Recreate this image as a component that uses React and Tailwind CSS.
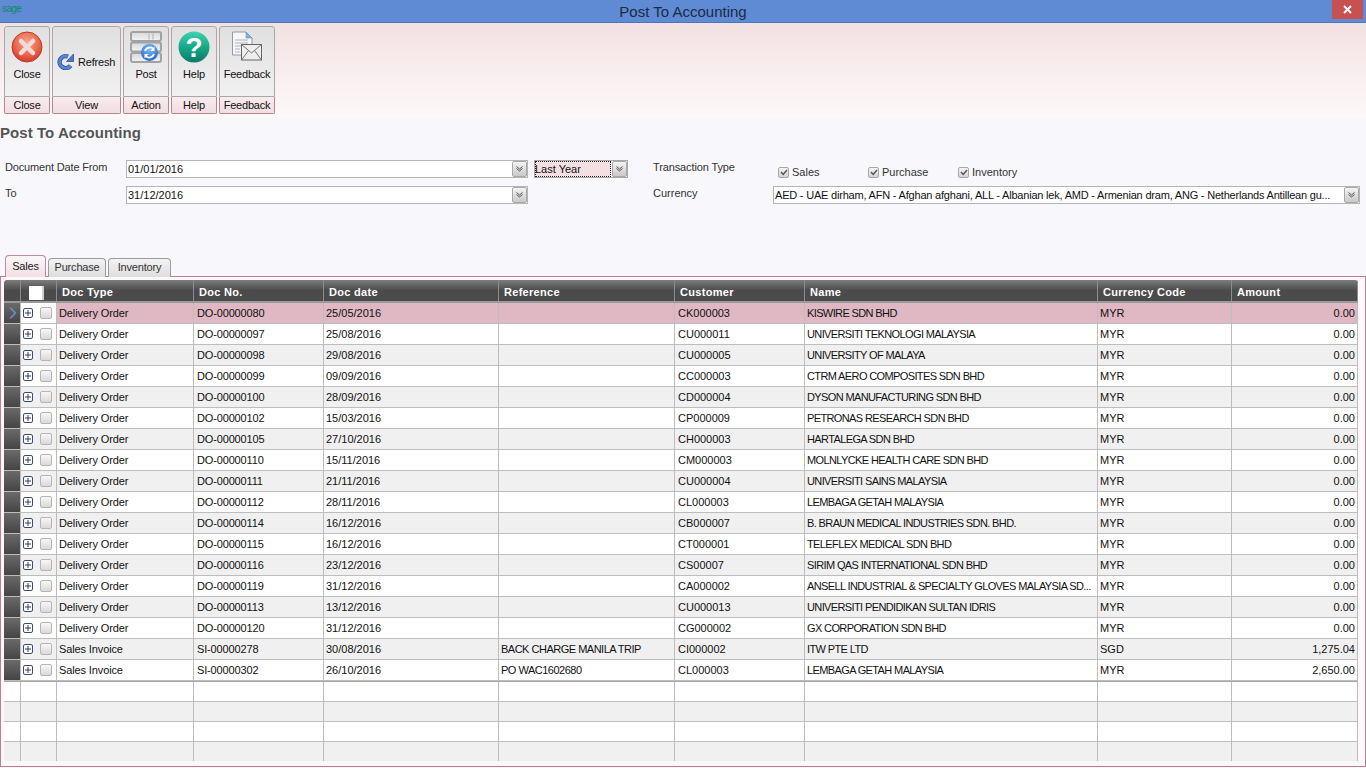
import React from 'react';

const tahoma = "font-['Liberation_Sans',Arial,sans-serif]";

const columns = [
    { key: 'rowHead', width: 'w-[17px]' },
    { key: 'tools', width: 'w-[36px]' },
    { key: 'type', width: 'w-[137px]', label: 'Doc Type', cell: 'pl-[2px] tracking-[-0.12px]' },
    { key: 'no', width: 'w-[130px]', label: 'Doc No.', cell: 'pl-[3px] tracking-[-0.15px]' },
    { key: 'date', width: 'w-[175px]', label: 'Doc date', cell: 'pl-[2px]' },
    { key: 'ref', width: 'w-[176px]', label: 'Reference', cell: 'pl-[2px] tracking-[-0.5px]' },
    { key: 'cust', width: 'w-[130px]', label: 'Customer', cell: 'pl-[3px]' },
    { key: 'name', width: 'w-[293px]', label: 'Name', cell: 'pl-[2px] tracking-[-0.62px]' },
    { key: 'cur', width: 'w-[134px]', label: 'Currency Code', cell: 'pl-[2px]' },
    { key: 'amt', width: 'w-[126px]', label: 'Amount', cell: 'pr-[2px] text-right' },
];

const rows = [
    ['Delivery Order', 'DO-00000080', '25/05/2016', '', 'CK000003', 'KISWIRE SDN BHD', 'MYR', '0.00'],
    ['Delivery Order', 'DO-00000097', '25/08/2016', '', 'CU000011', 'UNIVERSITI TEKNOLOGI MALAYSIA', 'MYR', '0.00'],
    ['Delivery Order', 'DO-00000098', '29/08/2016', '', 'CU000005', 'UNIVERSITY OF MALAYA', 'MYR', '0.00'],
    ['Delivery Order', 'DO-00000099', '09/09/2016', '', 'CC000003', 'CTRM AERO COMPOSITES SDN BHD', 'MYR', '0.00'],
    ['Delivery Order', 'DO-00000100', '28/09/2016', '', 'CD000004', 'DYSON MANUFACTURING SDN BHD', 'MYR', '0.00'],
    ['Delivery Order', 'DO-00000102', '15/03/2016', '', 'CP000009', 'PETRONAS RESEARCH SDN BHD', 'MYR', '0.00'],
    ['Delivery Order', 'DO-00000105', '27/10/2016', '', 'CH000003', 'HARTALEGA SDN BHD', 'MYR', '0.00'],
    ['Delivery Order', 'DO-00000110', '15/11/2016', '', 'CM000003', 'MOLNLYCKE HEALTH CARE SDN BHD', 'MYR', '0.00'],
    ['Delivery Order', 'DO-00000111', '21/11/2016', '', 'CU000004', 'UNIVERSITI SAINS MALAYSIA', 'MYR', '0.00'],
    ['Delivery Order', 'DO-00000112', '28/11/2016', '', 'CL000003', 'LEMBAGA GETAH MALAYSIA', 'MYR', '0.00'],
    ['Delivery Order', 'DO-00000114', '16/12/2016', '', 'CB000007', 'B. BRAUN MEDICAL INDUSTRIES SDN. BHD.', 'MYR', '0.00'],
    ['Delivery Order', 'DO-00000115', '16/12/2016', '', 'CT000001', 'TELEFLEX MEDICAL SDN BHD', 'MYR', '0.00'],
    ['Delivery Order', 'DO-00000116', '23/12/2016', '', 'CS00007', 'SIRIM QAS INTERNATIONAL SDN BHD', 'MYR', '0.00'],
    ['Delivery Order', 'DO-00000119', '31/12/2016', '', 'CA000002', 'ANSELL INDUSTRIAL & SPECIALTY GLOVES MALAYSIA SD...', 'MYR', '0.00'],
    ['Delivery Order', 'DO-00000113', '13/12/2016', '', 'CU000013', 'UNIVERSITI PENDIDIKAN SULTAN IDRIS', 'MYR', '0.00'],
    ['Delivery Order', 'DO-00000120', '31/12/2016', '', 'CG000002', 'GX CORPORATION SDN BHD', 'MYR', '0.00'],
    ['Sales Invoice', 'SI-00000278', '30/08/2016', 'BACK CHARGE MANILA TRIP', 'CI000002', 'ITW PTE LTD', 'SGD', '1,275.04'],
    ['Sales Invoice', 'SI-00000302', '26/10/2016', 'PO WAC1602680', 'CL000003', 'LEMBAGA GETAH MALAYSIA', 'MYR', '2,650.00'],
];

const CloseIcon = () => (
    <svg width="32" height="32" viewBox="0 0 32 32">
        <defs>
            <radialGradient id="closeBg" cx="50%" cy="35%" r="70%">
                <stop offset="0%" stopColor="#f7a58f" />
                <stop offset="55%" stopColor="#ec6a50" />
                <stop offset="100%" stopColor="#cf2f20" />
            </radialGradient>
        </defs>
        <circle cx="16" cy="16" r="15" fill="url(#closeBg)" stroke="#c0392b" />
        <path d="M10 10 L22 22 M22 10 L10 22" stroke="#f0dcd6" strokeWidth="4.5" strokeLinecap="round" />
    </svg>
);

const RefreshIcon = () => (
    <svg width="17" height="17" viewBox="0 0 17 17">
        <path d="M13.5 12.6 A6 6 0 1 1 11 3.6" fill="none" stroke="#2b4f95" strokeWidth="4.4" />
        <path d="M13.5 12.6 A6 6 0 1 1 11 3.6" fill="none" stroke="#5585d2" strokeWidth="3" />
        <path d="M9.5 8.5 L16.5 8.5 L16.5 1 Z" fill="#4a78c8" stroke="#2b4f95" strokeWidth="0.8" />
    </svg>
);

const PostIcon = () => (
    <svg width="32" height="32" viewBox="0 0 32 32">
        <defs>
            <linearGradient id="postBar" x1="0" y1="0" x2="0" y2="1">
                <stop offset="0%" stopColor="#d8d8d8" />
                <stop offset="100%" stopColor="#f4f4f4" />
            </linearGradient>
            <radialGradient id="postBall" cx="50%" cy="30%" r="75%">
                <stop offset="0%" stopColor="#7cc0f5" />
                <stop offset="100%" stopColor="#1f5fc4" />
            </radialGradient>
        </defs>
        <rect x="1" y="1" width="30" height="9" rx="2" fill="url(#postBar)" stroke="#a2a2a2" strokeWidth="2" />
        <rect x="1" y="11.5" width="30" height="9" rx="2" fill="url(#postBar)" stroke="#a2a2a2" strokeWidth="2" />
        <rect x="1" y="22" width="30" height="9" rx="2" fill="url(#postBar)" stroke="#a2a2a2" strokeWidth="2" />
        <path d="M19 2.5 V8.5 M23 2.5 V8.5" stroke="#c2c2c2" strokeWidth="1.5" />
        <circle cx="19.5" cy="21.5" r="8.5" fill="url(#postBall)" />
        <path d="M15 20 A5 5 0 0 1 23.5 18.1 M24 23 A5 5 0 0 1 15.5 24.9" stroke="#fff" strokeWidth="1.8" fill="none" />
        <path d="M24.5 15.5 V19.9 H20.3 Z M14.5 27.5 V23.1 H18.7 Z" fill="#fff" />
    </svg>
);

const HelpIcon = () => (
    <svg width="32" height="32" viewBox="0 0 32 32">
        <defs>
            <linearGradient id="helpBg" x1="0" y1="0" x2="0" y2="1">
                <stop offset="0%" stopColor="#3fd0ac" />
                <stop offset="55%" stopColor="#15a585" />
                <stop offset="100%" stopColor="#0b7a66" />
            </linearGradient>
        </defs>
        <circle cx="16" cy="16" r="15.5" fill="url(#helpBg)" />
        <text x="16" y="26" textAnchor="middle" fontSize="28" fontWeight="700" fill="#fff" fontFamily="Liberation Sans, sans-serif">?</text>
    </svg>
);

const FeedbackIcon = () => (
    <svg width="32" height="32" viewBox="0 0 32 32">
        <path d="M1.5 1 H15 L21 7 V24 H1.5 Z" fill="#f6f6f6" stroke="#8f9aa8" />
        <path d="M15 1 V7 H21 Z" fill="#7fb2e6" stroke="#6a8fbb" strokeWidth="0.6" />
        <path d="M4 9 H17 M4 12 H17 M4 15 H11 M4 18 H9 M4 21 H9" stroke="#a9b4c0" strokeWidth="1.2" />
        <rect x="10.5" y="13.5" width="20" height="15.5" fill="#eeeeee" stroke="#666" />
        <path d="M10.5 13.5 L20.5 22 L30.5 13.5 M10.5 29 L17.5 19.5 M30.5 29 L23.5 19.5" fill="none" stroke="#777" />
    </svg>
);

const ribbon = [
    { w: 'w-[46px]', group: 'Close', label: 'Close', icon: <CloseIcon /> },
    { w: 'w-[69px]', group: 'View', label: 'Refresh', icon: <RefreshIcon />, inline: true },
    { w: 'w-[46px]', group: 'Action', label: 'Post', icon: <PostIcon /> },
    { w: 'w-[46px]', group: 'Help', label: 'Help', icon: <HelpIcon /> },
    { w: 'w-[56px]', group: 'Feedback', label: 'Feedback', icon: <FeedbackIcon /> },
];

const DropButton = () => (
    <div className="w-[15px] h-[16px] shrink-0 flex items-center justify-center rounded-[2px] border border-[#a8a8a8] bg-gradient-to-b from-[#f4f4f4] to-[#c9c9c9]">
        <svg width="7" height="6" viewBox="0 0 7 6">
            <path d="M0.5 0.5 L3.5 3 L6.5 0.5 M0.5 2.5 L3.5 5 L6.5 2.5" fill="none" stroke="#555" />
        </svg>
    </div>
);

const Combo = ({ value, width, textClass = '' }) => (
    <div className={`${width} h-[18px] flex items-center bg-white border border-[#b4b4b4] pl-[1px] shrink-0`}>
        <span className={`flex-1 truncate leading-[16px] text-[#111] ${textClass}`}>{value}</span>
        <DropButton />
    </div>
);

const Check = ({ label, width }) => (
    <div className={`${width} flex items-center gap-[3px] text-[#333]`}>
        <div className="w-[11px] h-[11px] flex items-center justify-center rounded-[2px] border border-[#a6a6a6] bg-gradient-to-b from-[#f4f4f4] to-[#d4d4d4]">
            <svg width="8" height="7" viewBox="0 0 8 7">
                <path d="M1 3 L3.2 5.4 L7 1" fill="none" stroke="#555" strokeWidth="1.5" />
            </svg>
        </div>
        <span>{label}</span>
    </div>
);

const Tab = ({ label, active, width }) => (
    <div
        className={`${width} flex items-center justify-center rounded-t-[4px] border border-b-0 tracking-[-0.2px] ${
            active
                ? 'h-[22px] border-[#c08aa0] bg-gradient-to-b from-[#fdf6f7] to-[#f3dfe3] text-[#222]'
                : 'h-[19px] pb-[1px] border-[#9c9c9c] bg-gradient-to-b from-[#f3f3f3] to-[#dedede] text-[#333]'
        }`}
    >
        {label}
    </div>
);

const RowExtras = () => (
    <div className="flex items-center pl-[2px] gap-[7px] h-full">
        <div className="w-[10px] h-[10px] flex items-center justify-center rounded-[2px] border border-[#3d4a78] bg-white">
            <svg width="6" height="6" viewBox="0 0 6 6">
                <path d="M3 0 V6 M0 3 H6" stroke="#2e3a66" strokeWidth="1" />
            </svg>
        </div>
        <div className="w-[12px] h-[12px] rounded-[2px] border border-[#b5b5b5] bg-gradient-to-b from-[#f8f8f8] to-[#d9d9d9]" />
    </div>
);

const Row = ({ row, index }) => {
    const selected = index === 0;
    const shade = index % 2 === 0 && !selected ? 'bg-[#f0f0f0]' : 'bg-white';
    return (
        <div className={`flex h-[21px] border-b border-[#bdbdbd] ${shade}`}>
            <div className="w-[17px] shrink-0 border-r border-[#bdbdbd] bg-gradient-to-b from-[#6a6a6a] to-[#454545] flex items-center justify-center">
                {selected && (
                    <svg width="9" height="12" viewBox="0 0 9 12">
                        <path d="M1 0.5 L6 6 L1 11.5 H3.5 L8.5 6 L3.5 0.5 Z" fill="#6f83c4" />
                    </svg>
                )}
            </div>
            <div className="w-[36px] shrink-0 border-r border-[#bdbdbd]">
                <RowExtras />
            </div>
            {row.map((cell, i) => {
                const col = columns[i + 2];
                return (
                    <div
                        key={col.key}
                        className={`${col.width} ${col.cell} shrink-0 border-r border-[#bdbdbd] whitespace-nowrap overflow-hidden leading-[20px] text-[#111] ${
                            selected ? 'bg-[#dfb8c4]' : ''
                        }`}
                    >
                        {cell}
                    </div>
                );
            })}
        </div>
    );
};

const EmptyRow = ({ shaded, last }) => (
    <div className={`flex ${last ? 'h-[19px]' : 'h-[20px] border-b border-[#bdbdbd]'} ${shaded ? 'bg-[#f0f0f0]' : 'bg-white'}`}>
        {columns.map((col) => (
            <div key={col.key} className={`${col.width} shrink-0 border-r border-[#bdbdbd]`} />
        ))}
    </div>
);

export default function App() {
    return (
        <div className={`${tahoma} w-[1366px] h-[768px] overflow-hidden flex flex-col text-[11px] bg-[#f8f8fc]`}>
            {/* title bar */}
            <div className="h-[23px] shrink-0 flex bg-[#5f8bd5] border-b border-[#4d76b8]">
                <div className="w-[1332px] relative flex items-center justify-center text-[15px] pt-[3px] text-[#1c2a44]">
                    <span className="absolute left-[2px] top-[3px] text-[10px] leading-[12px] tracking-[-0.6px] text-[#0b8a62]">sage</span>
                    <span className="pl-[34px]">Post To Accounting</span>
                </div>
                <div className="w-[31px] h-[19px] flex items-center justify-center bg-[#c75050]">
                    <svg width="9" height="9" viewBox="0 0 9 9">
                        <path d="M1 1 L8 8 M8 1 L1 8" stroke="#fff" strokeWidth="2" />
                    </svg>
                </div>
            </div>

            {/* ribbon */}
            <div className="h-[95px] shrink-0 flex gap-[2px] pt-[3px] pl-[4px] bg-gradient-to-b from-[#f3e1e3] to-[#fdf9f9]">
                {ribbon.map((item) => (
                    <div key={item.group} className={`${item.w} flex flex-col`}>
                        <div
                            className={`h-[71px] rounded-t-[3px] border border-[#a8a8a8] bg-gradient-to-b from-[#e0e0e0] to-[#f1f1f1] flex items-center text-[#111] tracking-[-0.2px] ${
                                item.inline ? 'gap-[4px] pl-[4px]' : 'flex-col pt-[4px]'
                            }`}
                        >
                            {item.inline ? (
                                item.icon
                            ) : (
                                <div className="h-[37px] flex items-start justify-center">{item.icon}</div>
                            )}
                            <span className={item.inline ? 'pt-[1px]' : 'leading-[13px]'}>{item.label}</span>
                        </div>
                        <div className="h-[17px] rounded-b-[2px] border border-t-0 border-[#b4868f] bg-gradient-to-b from-[#f8ecee] to-[#f2dde0] flex items-center justify-center text-[#111] tracking-[-0.2px]">
                            {item.group}
                        </div>
                    </div>
                ))}
            </div>

            {/* filters */}
            <div className="h-[137px] shrink-0 flex flex-col">
                <h1 className="h-[42px] pt-[7px] text-[15px] leading-[16px] font-bold tracking-[0.05px] text-[#555]">Post To Accounting</h1>
                <div className="flex flex-col gap-[8px]">
                    <div className="flex h-[18px]">
                        <span className="w-[126px] pl-[5px] -mt-[1px] text-[#333] tracking-[-0.16px]">Document Date From</span>
                        <Combo value="01/01/2016" width="w-[402px]" />
                        <div className="ml-[6px] w-[94px] h-[18px] flex items-center border border-[#a8a8a8] bg-[#f8f8fc]">
                            <span className="w-[77px] h-[16px] leading-[15px] border border-dotted border-[#222] bg-[#f4e0e3] text-[#111] -indent-[1px]">Last Year</span>
                            <span className="ml-[1px]"><DropButton /></span>
                        </div>
                        <span className="ml-[25px] w-[120px] -mt-[1px] text-[#333] tracking-[-0.12px]">Transaction Type</span>
                        <div className="w-[5px]" />
                        <div className="flex items-center pt-[6px]">
                            <Check label="Sales" width="w-[90px]" />
                            <Check label="Purchase" width="w-[90px]" />
                            <Check label="Inventory" width="w-[90px]" />
                        </div>
                    </div>
                    <div className="flex h-[18px]">
                        <span className="w-[126px] pl-[5px] -mt-[1px] text-[#333]">To</span>
                        <Combo value="31/12/2016" width="w-[402px]" />
                        <span className="ml-[125px] w-[120px] -mt-[1px] text-[#333]">Currency</span>
                        <Combo
                            value="AED - UAE dirham, AFN - Afghan afghani, ALL - Albanian lek, AMD - Armenian dram, ANG - Netherlands Antillean gu..."
                            width="w-[587px]"
                            textClass="tracking-[-0.2px]"
                        />
                    </div>
                </div>
            </div>

            {/* tabs */}
            <div className="h-[22px] shrink-0 flex items-end gap-[2px] pl-[5px] relative z-10 -mb-[1px]">
                <Tab label="Sales" active width="w-[41px]" />
                <Tab label="Purchase" width="w-[58px]" />
                <Tab label="Inventory" width="w-[63px]" />
            </div>

            {/* grid panel */}
            <div className="h-[491px] shrink-0 border border-[#b87f95] pt-[3px] pl-[3px] bg-[#fff8f9] overflow-hidden">
                <div className="w-[1354px]">
                    <div className="flex h-[23px] rounded-t-[3px] overflow-hidden border-b-2 border-[#9a9a9a] bg-gradient-to-b from-[#7d7d7d] via-[#4b4b4b] to-[#4b4b4b]">
                        {columns.map((col) => (
                            <div
                                key={col.key}
                                className={`${col.width} shrink-0 border-r border-[#8c8c8c] pl-[5px] pt-[1px] leading-[22px] text-white font-bold tracking-[0.3px]`}
                            >
                                {col.key === 'tools' ? (
                                    <div className="ml-[3px] mt-[5px] w-[15px] h-[14px] bg-white border-r-2 border-[#cfcfcf]" />
                                ) : (
                                    col.label
                                )}
                            </div>
                        ))}
                    </div>
                    {rows.map((row, index) => (
                        <Row key={row[1]} row={row} index={index} />
                    ))}
                    <div className="h-[1px] bg-[#a8a8a8]" />
                    <EmptyRow />
                    <EmptyRow shaded />
                    <EmptyRow />
                    <EmptyRow shaded last />
                </div>
            </div>
        </div>
    );
}
